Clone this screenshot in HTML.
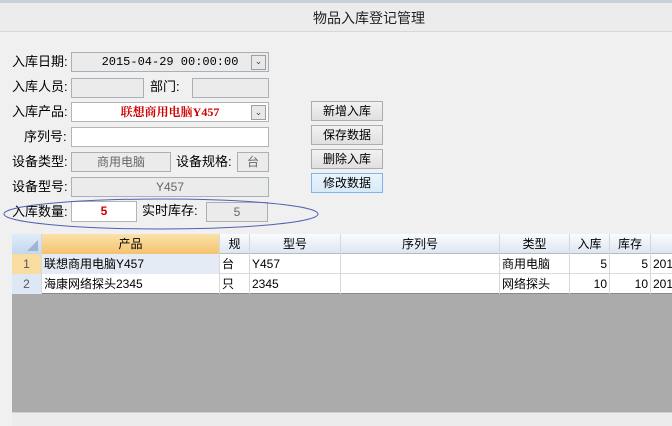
<!DOCTYPE html><html><head><meta charset="utf-8"><style>
body{margin:0;width:672px;height:425px;overflow:hidden;background:#f0f0f0;font-family:"Liberation Sans","Noto Sans CJK SC",sans-serif;font-size:12px;position:relative}
.a{position:absolute}
.lb{position:absolute;font-size:13px;color:#000;margin-top:-3px}
.in{position:absolute;background:#fff;border:1px solid #b4b4b4;box-sizing:border-box;text-align:center;line-height:18px;font-size:12px}
.ro{background:#ebebeb;color:#666;border-color:#a8b0b8}
.dd{position:absolute;right:2px;top:2px;width:15px;height:15px;border:1px solid #a0a0a0;background:#e8e8e8;box-sizing:border-box;font-size:9px;line-height:13px;color:#444}
.bt{position:absolute;left:311px;width:72px;height:20px;border:1px solid #adadad;background:linear-gradient(#f2f2f2,#e0e0e0);box-sizing:border-box;text-align:center;line-height:18px;font-size:12px}
.c{position:absolute;top:0;height:20px;border-right:1px solid #d8d8d8;box-sizing:border-box;line-height:20px;padding:0 2px;white-space:nowrap;overflow:hidden}
</style></head><body>
<div class="a" style="left:0;top:0;width:672px;height:3px;background:#c8d0d8"></div>
<div class="a" style="left:0;top:3px;width:672px;height:28px;background:#ececec;border-bottom:1px solid #d8d8d8"></div>
<div class="a" style="left:313px;top:8px;font-size:14px;color:#222">物品入库登记管理</div>
<div class="lb" style="left:12px;top:54px">入库日期:</div>
<div class="in ro" style="left:71px;top:52px;width:198px;height:20px;color:#000;font-family:'Liberation Mono',monospace">2015-04-29 00:00:00<div class="dd">⌄</div></div>
<div class="lb" style="left:12px;top:79px">入库人员:</div>
<div class="in ro" style="left:71px;top:78px;width:73px;height:20px"></div>
<div class="lb" style="left:150px;top:79px">部门:</div>
<div class="in ro" style="left:192px;top:78px;width:77px;height:20px"></div>
<div class="lb" style="left:12px;top:104px">入库产品:</div>
<div class="in" style="left:71px;top:102px;width:198px;height:20px;color:#d00000;font-weight:bold;font-family:'Liberation Serif','Noto Serif CJK SC',serif">联想商用电脑Y457<div class="dd" style="font-weight:normal">⌄</div></div>
<div class="lb" style="left:24px;top:129px">序列号:</div>
<div class="in" style="left:71px;top:127px;width:198px;height:20px"></div>
<div class="lb" style="left:12px;top:154px">设备类型:</div>
<div class="in ro" style="left:71px;top:152px;width:100px;height:20px">商用电脑</div>
<div class="lb" style="left:176px;top:154px">设备规格:</div>
<div class="in ro" style="left:237px;top:152px;width:32px;height:20px">台</div>
<div class="lb" style="left:12px;top:179px">设备型号:</div>
<div class="in ro" style="left:71px;top:177px;width:198px;height:20px">Y457</div>
<div class="lb" style="left:12px;top:204px">入库数量:</div>
<div class="in" style="left:71px;top:201px;width:66px;height:21px;color:#d00000;font-weight:bold">5</div>
<div class="lb" style="left:142px;top:203px">实时库存:</div>
<div class="in ro" style="left:206px;top:202px;width:62px;height:20px">5</div>
<svg class="a" style="left:0;top:195px" width="330" height="40"><ellipse cx="161" cy="19" rx="157" ry="15" fill="none" stroke="#5060b0" stroke-width="1"/></svg>
<div class="bt" style="top:101px">新增入库</div>
<div class="bt" style="top:125px">保存数据</div>
<div class="bt" style="top:149px">删除入库</div>
<div class="bt" style="top:173px;background:linear-gradient(#eaf4fc,#d8eaf8);border-color:#7eb4ea">修改数据</div>
<div class="a" style="left:12px;top:234px;width:660px;height:178px;background:#ababab"></div>
<div class="a" style="left:12px;top:234px;width:660px;height:20px;background:linear-gradient(#fafcfe,#dde6f0);border-bottom:1px solid #b0bcc8;box-sizing:border-box">
<div class="c" style="left:0;width:30px;background:linear-gradient(#e0ecf8,#c4d8ee)"><svg width="26" height="20"><polygon points="24,6 24,17 13,17" fill="#9db4d4"/></svg></div>
<div class="c" style="left:30px;width:178px;text-align:center;background:linear-gradient(#fbe2a8,#f4c270)">产品</div>
<div class="c" style="left:208px;width:30px;text-align:center">规</div>
<div class="c" style="left:238px;width:91px;text-align:center">型号</div>
<div class="c" style="left:329px;width:159px;text-align:center">序列号</div>
<div class="c" style="left:488px;width:70px;text-align:center">类型</div>
<div class="c" style="left:558px;width:40px;text-align:center">入库</div>
<div class="c" style="left:598px;width:41px;text-align:center">库存</div>
</div>
<div class="a" style="left:12px;top:254px;width:660px;height:20px;background:#fff;border-bottom:1px solid #dcdcdc;box-sizing:border-box">
<div class="c" style="left:0;width:30px;text-align:center;background:#f8dca0;color:#555">1</div>
<div class="c" style="left:30px;width:178px;background:#e4ebf4">联想商用电脑Y457</div>
<div class="c" style="left:208px;width:30px">台</div>
<div class="c" style="left:238px;width:91px">Y457</div>
<div class="c" style="left:329px;width:159px"></div>
<div class="c" style="left:488px;width:70px">商用电脑</div>
<div class="c" style="left:558px;width:40px;text-align:right">5</div>
<div class="c" style="left:598px;width:41px;text-align:right">5</div>
<div class="c" style="left:639px;width:30px">201</div>
</div>
<div class="a" style="left:12px;top:274px;width:660px;height:20px;background:#fff;border-bottom:1px solid #888;box-sizing:border-box">
<div class="c" style="left:0;width:30px;text-align:center;background:#dde8f4;color:#555">2</div>
<div class="c" style="left:30px;width:178px">海康网络探头2345</div>
<div class="c" style="left:208px;width:30px">只</div>
<div class="c" style="left:238px;width:91px">2345</div>
<div class="c" style="left:329px;width:159px"></div>
<div class="c" style="left:488px;width:70px">网络探头</div>
<div class="c" style="left:558px;width:40px;text-align:right">10</div>
<div class="c" style="left:598px;width:41px;text-align:right">10</div>
<div class="c" style="left:639px;width:30px">201</div>
</div>
<div class="a" style="left:12px;top:412px;width:660px;height:13px;background:#ececec;border-top:1px solid #d0d0d0"></div>
</body></html>
